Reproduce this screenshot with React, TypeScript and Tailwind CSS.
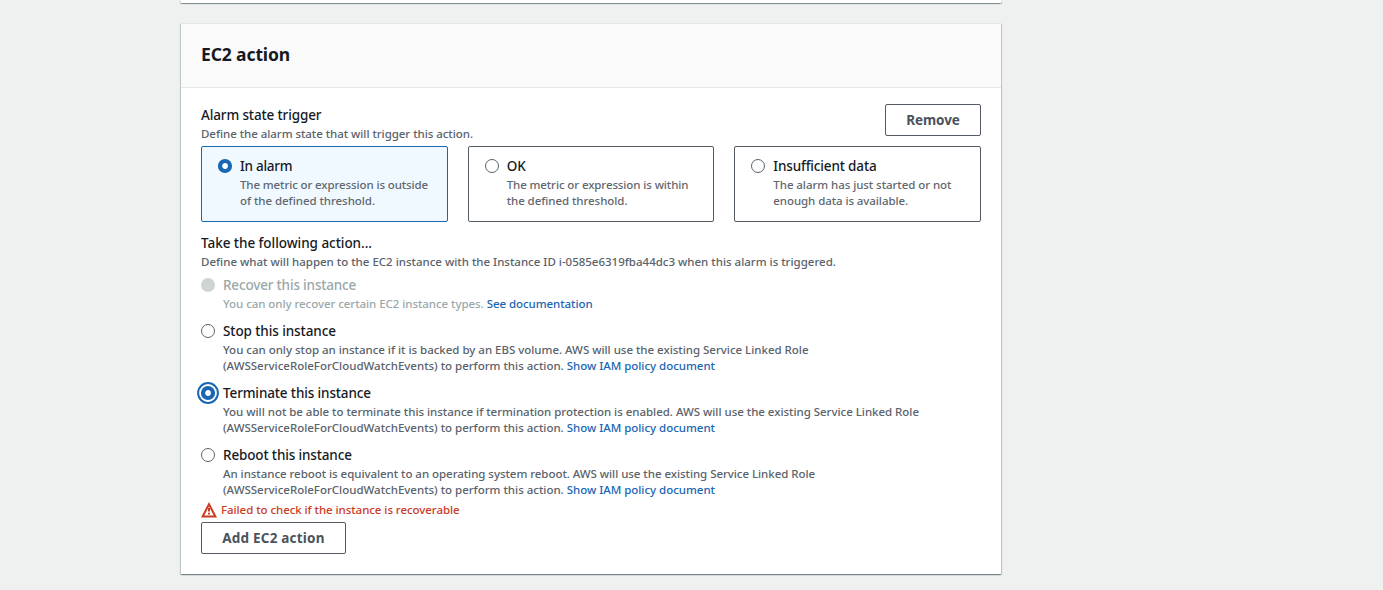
import React from 'react';

type RadioState = 'on' | 'off' | 'disabled' | 'focused';

function Radio({ state }: { state: RadioState }) {
  return (
    <span className="flex h-[22px] w-[14px] shrink-0 items-center">
      <svg width="14" height="14" viewBox="0 0 14 14" className="overflow-visible">
        {state === 'focused' && (
          <circle cx="7" cy="7" r="9.9" fill="#fff" stroke="#1a66b3" strokeWidth="2" />
        )}
        {(state === 'on' || state === 'focused') && (
          <circle cx="7" cy="7" r="5" fill="#fff" stroke="#1a66b3" strokeWidth="4.2" />
        )}
        {state === 'off' && <circle cx="7" cy="7" r="6.5" fill="#fff" stroke="#5a626b" />}
        {state === 'disabled' && <circle cx="7" cy="7" r="7" fill="#ced5d5" />}
      </svg>
    </span>
  );
}

const label = 'text-[13.5px] leading-[22px] font-medium whitespace-nowrap';
const small = 'text-[11.5px] leading-4 font-medium whitespace-nowrap';

function Tile({ state, title, titleClass, children }: { state: RadioState; title: string; titleClass: string; children: React.ReactNode }) {
  return (
    <div
      className={
        state === 'on'
          ? 'flex h-[76px] gap-2 rounded-[2px] border border-[#1a66b3] bg-[#eff9ff] pt-2 pl-4'
          : 'flex h-[76px] gap-2 rounded-[2px] border border-[#545b64] bg-white pt-2 pl-4'
      }
    >
      <Radio state={state} />
      <div>
        <div className={`${label} ${titleClass}`}>{title}</div>
        <div className={`${small} text-[#5f6770]`}>{children}</div>
      </div>
    </div>
  );
}

function Option({ state, title, titleClass, children }: { state: RadioState; title: string; titleClass: string; children: React.ReactNode }) {
  const disabled = state === 'disabled';
  return (
    <div className="flex gap-2">
      <Radio state={state} />
      <div>
        <div className={`${label} ${titleClass} ${disabled ? 'text-[#9aa8a9]' : ''}`}>{title}</div>
        <div className={`${small} ${disabled ? 'text-[#9aa8a9]' : 'text-[#5a626b]'}`}>{children}</div>
      </div>
    </div>
  );
}

function RoleLine() {
  return (
    <div>
      <span className="tracking-[-0.01px]">(AWSServiceRoleForCloudWatchEvents) to perform this action. </span>
      <a className="tracking-[-0.03px] text-[#1a66b3]">Show IAM policy document</a>
    </div>
  );
}

const card = 'shadow-[0_1px_1px_0_rgba(0,28,36,0.3),1px_1px_1px_0_rgba(0,28,36,0.15),-1px_1px_1px_0_rgba(0,28,36,0.15)]';

export default function App() {
  return (
    <div className="h-[590px] overflow-hidden bg-[#eff1f1] pl-[181px] font-['Noto_Sans',sans-serif] text-[#16191f]">
      <div className={`h-[3px] w-[820px] bg-white ${card}`} />
      <section className={`mt-5 w-[820px] border-t border-[#e4e7e7] bg-white ${card}`}>
        <header className="flex h-16 items-center border-b border-[#e4e7e7] bg-[#fafafa] px-5">
          <h2 className="pb-[3px] text-[17.5px] leading-[22px] font-bold tracking-[-0.12px]">EC2 action</h2>
        </header>
        <div className="px-5 pt-4 pb-5">
          <div className="flex h-[42px] items-start justify-between">
            <div>
              <div className={`${label} tracking-[-0.13px]`}>Alarm state trigger</div>
              <div className={`${small} tracking-[-0.047px] text-[#5a626b]`}>Define the alarm state that will trigger this action.</div>
            </div>
            <button className="h-8 w-24 rounded-[2px] border border-[#545b64] bg-white text-[13.5px] font-bold tracking-[-0.1px] text-[#4b525c]">
              Remove
            </button>
          </div>
          <div className="grid grid-cols-3 gap-5">
            <Tile state="on" title="In alarm" titleClass="tracking-[-0.27px]">
              <div className="tracking-[-0.11px]">The metric or expression is outside</div>
              <div className="tracking-[-0.05px]">of the defined threshold.</div>
            </Tile>
            <Tile state="off" title="OK" titleClass="tracking-[-0.1px]">
              <div className="tracking-[-0.1px]">The metric or expression is within</div>
              <div className="tracking-[-0.06px]">the defined threshold.</div>
            </Tile>
            <Tile state="off" title="Insufficient data" titleClass="tracking-[-0.15px]">
              <div className="tracking-[-0.06px]">The alarm has just started or not</div>
              <div className="tracking-[-0.08px]">enough data is available.</div>
            </Tile>
          </div>
          <div className={`${label} mt-2.5 tracking-[-0.04px]`}>Take the following action...</div>
          <div className={`${small} tracking-[-0.005px] text-[#5a626b]`}>
            Define what will happen to the EC2 instance with the Instance ID i-0585e6319fba44dc3 when this alarm is triggered.
          </div>
          <div className="mt-1 flex flex-col gap-2">
            <Option state="disabled" title="Recover this instance" titleClass="tracking-[-0.17px]">
              <span className="tracking-[-0.055px]">You can only recover certain EC2 instance types. </span>
              <a className="tracking-[-0.055px] text-[#1a66b3]">See documentation</a>
            </Option>
            <Option state="off" title="Stop this instance" titleClass="tracking-[-0.09px]">
              <div className="tracking-[-0.02px]">
                You can only stop an instance if it is backed by an EBS volume. AWS will use the existing Service Linked Role
              </div>
              <RoleLine />
            </Option>
            <Option state="focused" title="Terminate this instance" titleClass="tracking-[-0.13px]">
              <div className="tracking-[-0.028px]">
                You will not be able to terminate this instance if termination protection is enabled. AWS will use the existing Service Linked Role
              </div>
              <RoleLine />
            </Option>
            <Option state="off" title="Reboot this instance" titleClass="tracking-[-0.14px]">
              <div className="tracking-[-0.045px]">
                An instance reboot is equivalent to an operating system reboot. AWS will use the existing Service Linked Role
              </div>
              <RoleLine />
            </Option>
          </div>
          <div className="mt-1 flex h-4 items-center gap-1 text-[#cc3a22]">
            <svg width="16" height="16" viewBox="0 0 16 16" fill="none" stroke="currentColor" strokeWidth="2" strokeLinejoin="miter">
              <path d="M8 2.2 14.4 14.5H1.6Z" />
              <path d="M8 6v3.6M8 10.8v1.8" />
            </svg>
            <span className={`${small} tracking-[-0.06px]`}>Failed to check if the instance is recoverable</span>
          </div>
          <button className="mt-1 block h-8 w-[145px] rounded-[2px] border border-[#545b64] bg-white text-[13.5px] font-bold tracking-[0.2px] text-[#4b525c]">
            Add EC2 action
          </button>
        </div>
      </section>
    </div>
  );
}
